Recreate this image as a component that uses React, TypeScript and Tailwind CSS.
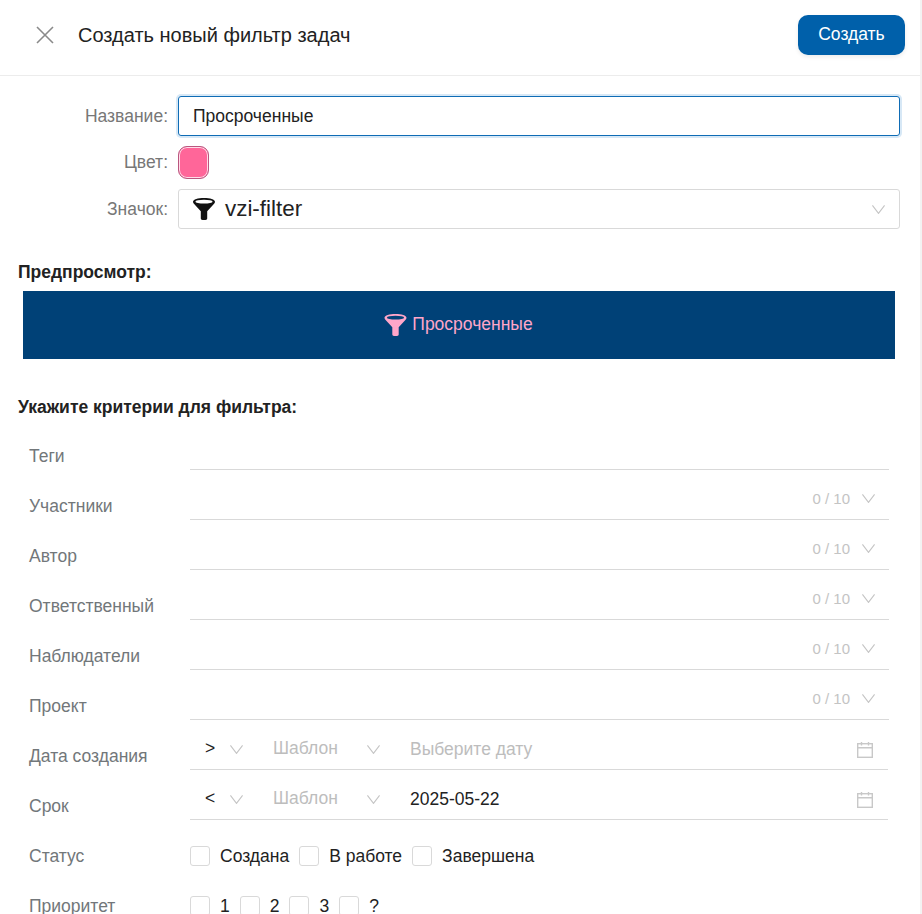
const Chevron = ({ className = "" }: { className?: string }) => (
  <svg viewBox="0 0 13 9" fill="none" stroke="#c4c4c4" strokeWidth="1.100" className={"w-[13px] h-[9px] " + className}>
    <path d="M0.400 0.400 L6.500 8.400 L12.600 0.400" />
  </svg>
);

const Funnel = ({ color, cut, className = "" }: { color: string; cut: string; className?: string }) => (
  <svg viewBox="0 0 22 22" className={className}>
    <path fill={color} d="M0 3.800C0 1.500 5 0 11 0s11 1.500 11 3.800c0 .8-.3 1.400-.9 2L14.200 13.200V20.500c0 1-1.200 1.500-3.200 1.500s-3.200-.5-3.200-1.500V13.200L.9 5.800C.3 5.200 0 4.600 0 3.800z" />
    <ellipse cx="11" cy="3.700" rx="8.600" ry="1.900" fill={cut} />
  </svg>
);

const Calendar = () => (
  <svg viewBox="0 0 16 16" fill="none" stroke="#c8c8c8" strokeWidth="1.400" className="w-4 h-4 mt-[3px]">
    <rect x="0.700" y="1.700" width="14.600" height="13.600" />
    <path d="M0.700 5.800h14.600M4.500 0v3.500M11.500 0v3.500" />
  </svg>
);

const Row = ({ label, counter }: { label: string; counter?: boolean }) => (
  <div className="flex h-[50px]">
    <div className="w-[161px] pt-[26px] leading-[20px] text-[#72777a] shrink-0">{label}</div>
    <div className="w-[699px] h-[50px] border-b border-[#d9d9d9] flex items-center justify-end pt-[8px] pr-[14px] gap-[12px]">
      {counter && (
        <>
          <span className="text-[15px] text-[#c4c4c4] translate-y-px">0 / 10</span>
          <Chevron />
        </>
      )}
    </div>
  </div>
);

const DateRow = ({ label, op, value }: { label: string; op: string; value?: string }) => (
  <div className="flex h-[50px]">
    <div className="w-[161px] pt-[26px] leading-[20px] text-[#72777a] shrink-0">{label}</div>
    <div className="flex h-[50px] w-[698px] border-b border-[#d9d9d9] pt-[19px]">
      <div className="flex w-[70px] items-start pl-[15px] h-[20px]">
        <span className="w-[25px] leading-[20px] text-[#222] -mt-px">{op}</span>
        <Chevron className="mt-[6px]" />
      </div>
      <div className="flex w-[132px] items-start pl-[13px] h-[20px]">
        <span className="w-[94px] leading-[20px] text-[#bdbdbd] -mt-px">Шаблон</span>
        <Chevron className="mt-[6px]" />
      </div>
      <div className={"flex-1 flex justify-between pl-[18px] pr-[15px] leading-[20px] " + (value ? "text-[#222]" : "text-[#bdbdbd]")}>
        <span>{value ?? "Выберите дату"}</span>
        <Calendar />
      </div>
    </div>
  </div>
);

const Check = ({ label }: { label: string }) => (
  <label className="flex items-center">
    <span className="w-5 h-5 mr-[10px] rounded-[3px] border border-[#d9d9d9] bg-white shrink-0" />
    <span className="text-[#222] leading-[20px]">{label}</span>
  </label>
);

export default function App() {
  return (
    <div className="h-[914px] overflow-hidden bg-[#f3f3f3] text-[17.500px] font-['Liberation_Sans',Arial,sans-serif]">
      <div className="w-[920px] h-[914px] bg-white overflow-hidden">
        <header className="h-[76px] flex items-center border-b border-[#ececec] pl-[36px] pr-[15px]">
          <svg viewBox="0 0 18 18" fill="none" stroke="#8a8a8a" strokeWidth="1.600" className="w-[18px] h-[18px] mr-[24px] -mt-[6px]">
            <path d="M1 1l16 16M17 1L1 17" />
          </svg>
          <h1 className="flex-1 text-[20px] leading-[24px] text-[#222] -mt-[6px]">Создать новый фильтр задач</h1>
          <button className="w-[107px] h-[40px] rounded-[10px] bg-[#0060aa] text-white shadow-[0_2px_4px_rgba(0,0,0,0.08)] -mt-[6px]">Создать</button>
        </header>

        <div className="flex items-center h-[40px] mt-[20px]">
          <div className="w-[168px] text-right text-[#777] mr-[10px]">Название:</div>
          <div className="w-[722px] h-[40px] rounded-[3px] border border-[#0f6cb5] shadow-[0_0_0_2px_#d7e8f6] flex items-center pl-[14px] text-[#222]">Просроченные</div>
        </div>
        <div className="flex items-center h-[33px] mt-[10px]">
          <div className="w-[168px] text-right text-[#777] mr-[10px]">Цвет:</div>
          <div className="w-[31px] h-[33px] rounded-[9px] border border-[#b9567f] bg-[#ff6699] shadow-[inset_0_0_0_1px_#ffdce8]" />
        </div>
        <div className="flex items-center h-[40px] mt-[10px]">
          <div className="w-[168px] text-right text-[#777] mr-[10px]">Значок:</div>
          <div className="w-[722px] h-[40px] rounded-[3px] border border-[#d9d9d9] flex items-center pl-[14px] pr-[14px]">
            <Funnel color="#111" cut="#fff" className="w-[22px] h-[22px] mr-[10px]" />
            <span className="flex-1 text-[22.400px] leading-[24px] text-[#222] -mt-[1px]">vzi-filter</span>
            <Chevron />
          </div>
        </div>

        <h2 className="font-bold text-[#222] leading-[20px] mt-[33px] ml-[18px]">Предпросмотр:</h2>
        <div className="ml-[23px] w-[872px] h-[68px] mt-[9px] bg-[#004177] flex items-center justify-center text-[#ffa6c9]">
          <Funnel color="#ffa6c9" cut="#004177" className="w-[23px] h-[22px] mr-[4px] -translate-x-px" />
          <span className="-mt-[2px]">Просроченные</span>
        </div>

        <h2 className="font-bold text-[#222] leading-[20px] mt-[38px] ml-[18px]">Укажите критерии для фильтра:</h2>

        <div className="ml-[29px] mt-[3px]">
          <Row label="Теги" />
          <Row label="Участники" counter />
          <Row label="Автор" counter />
          <Row label="Ответственный" counter />
          <Row label="Наблюдатели" counter />
          <Row label="Проект" counter />
          <DateRow label="Дата создания" op=">" />
          <DateRow label="Срок" op="<" value="2025-05-22" />
          <div className="flex h-[50px]">
            <div className="w-[161px] pt-[26px] leading-[20px] text-[#72777a] shrink-0">Статус</div>
            <div className="flex pt-[26px] h-[46px] gap-[10px]">
              <Check label="Создана" />
              <Check label="В работе" />
              <Check label="Завершена" />
            </div>
          </div>
          <div className="flex h-[50px]">
            <div className="w-[161px] pt-[26px] leading-[20px] text-[#72777a] shrink-0">Приоритет</div>
            <div className="flex pt-[26px] h-[46px] gap-[10px]">
              <Check label="1" />
              <Check label="2" />
              <Check label="3" />
              <Check label="?" />
            </div>
          </div>
        </div>
      </div>
    </div>
  );
}
